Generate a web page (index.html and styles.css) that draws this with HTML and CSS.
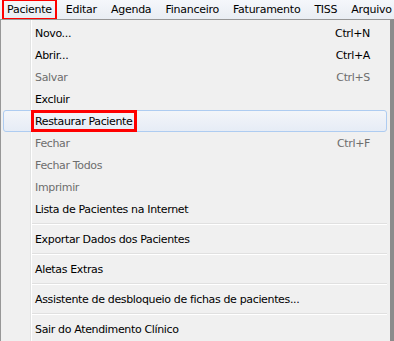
FILE: index.html
```html
<!DOCTYPE html>
<html lang="pt">
<head>
    <meta charset="UTF-8">
    <title>Menu Paciente</title>
    <link rel="stylesheet" href="styles.css">
</head>
<body>
    <div class="menubar">
        <span class="top-item marked">Paciente</span>
        <span class="top-item">Editar</span>
        <span class="top-item">Agenda</span>
        <span class="top-item">Financeiro</span>
        <span class="top-item">Faturamento</span>
        <span class="top-item">TISS</span>
        <span class="top-item">Arquivo</span>
    </div>
    <div class="menu">
        <div class="item"><span class="label">Novo...</span><span class="key">Ctrl+N</span></div>
        <div class="item"><span class="label">Abrir...</span><span class="key">Ctrl+A</span></div>
        <div class="item disabled"><span class="label">Salvar</span><span class="key">Ctrl+S</span></div>
        <div class="item"><span class="label">Excluir</span></div>
        <div class="item hover"><span class="label marked">Restaurar Paciente</span></div>
        <div class="item disabled"><span class="label">Fechar</span><span class="key">Ctrl+F</span></div>
        <div class="item disabled"><span class="label">Fechar Todos</span></div>
        <div class="item disabled"><span class="label">Imprimir</span></div>
        <div class="item"><span class="label">Lista de Pacientes na Internet</span></div>
        <div class="sep"></div>
        <div class="item"><span class="label">Exportar Dados dos Pacientes</span></div>
        <div class="sep"></div>
        <div class="item"><span class="label">Aletas Extras</span></div>
        <div class="sep"></div>
        <div class="item"><span class="label">Assistente de desbloqueio de fichas de pacientes...</span></div>
        <div class="sep"></div>
        <div class="item"><span class="label">Sair do Atendimento Clínico</span></div>
    </div>
</body>
</html>
```

FILE: styles.css
```css
body {
    margin: 0;
    background: #fff;
    font-family: "DejaVu Sans", Tahoma, sans-serif;
    font-size: 11px;
    letter-spacing: -0.35px;
    color: #000;
    width: 394px;
    height: 341px;
    overflow: hidden;
}
.menubar {
    height: 19px;
    background: linear-gradient(#f5f7fb, #e9edf3);
    display: flex;
    align-items: center;
    gap: 14px;
    padding-left: 8px;
    white-space: nowrap;
    overflow: hidden;
    letter-spacing: -0.25px;
}
.top-item {
    line-height: 15px;
}
.top-item.marked {
    outline: 2px solid #f00;
    outline-offset: 1px;
    padding: 0 2px;
    margin: 0 -2px 0 -3px;
}
.menu {
    box-sizing: border-box;
    width: 394px;
    border: 1px solid #979797;
    border-right: 4px solid #8c8c8c;
    background: #f0f0f0 linear-gradient(90deg, transparent 29px, #e2e3e3 29px, #e2e3e3 30px, #fff 30px, #fff 31px, transparent 31px);
    padding: 2px 3px 0 2px;
    height: 330px;
}
.item {
    height: 22px;
    display: flex;
    align-items: center;
    padding-left: 31px;
    padding-right: 16px;
    border: 1px solid transparent;
    border-radius: 3px;
    box-sizing: border-box;
}
.item .label {
    flex: 1;
}
.item .key {
    text-align: right;
}
.item.disabled {
    color: #6d6d6d;
}
.item.hover {
    border-color: #aeccf1;
    background: linear-gradient(#f3f5f9, #e6ecf6);
}
.label.marked {
    flex: none;
    outline: 3px solid #f00;
    outline-offset: 0;
    padding: 2px 2px 1px 1px;
    margin-left: -1px;
}
.sep {
    height: 8px;
    margin-left: 29px;
    background: linear-gradient(transparent 3px, #e0e0e0 3px, #e0e0e0 4px, #fff 4px, #fff 5px, transparent 5px);
}
```
